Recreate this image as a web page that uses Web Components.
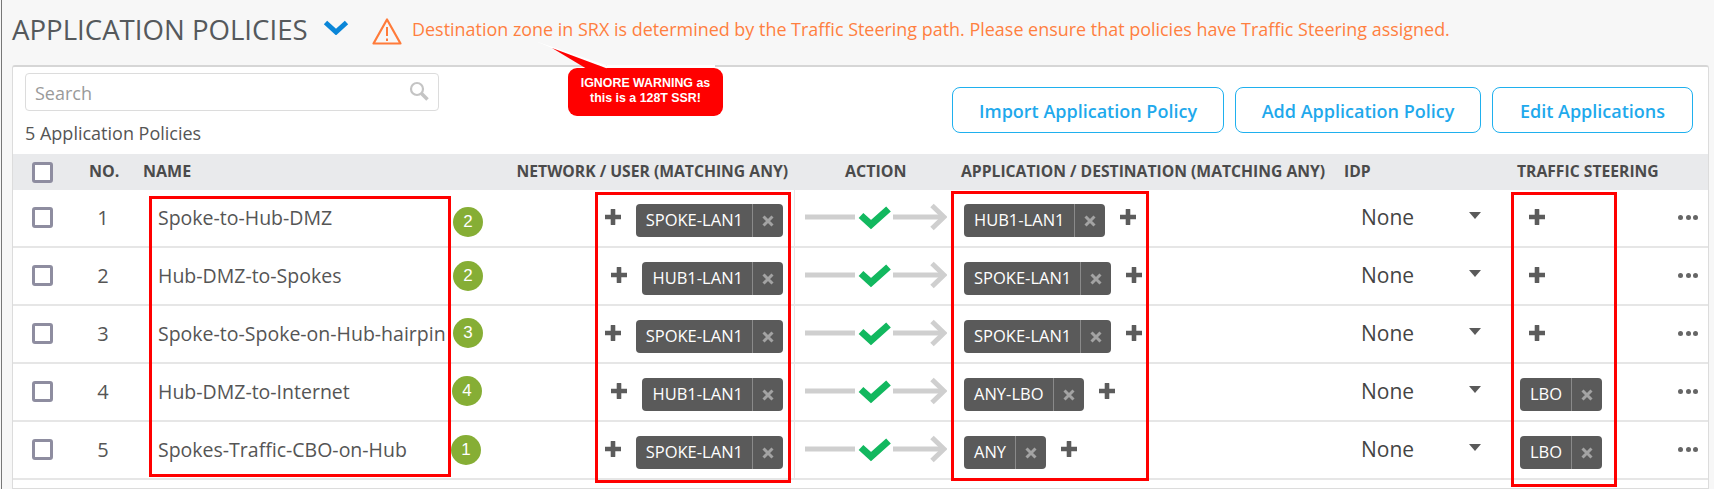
<!DOCTYPE html>
<html>
<head>
<meta charset="utf-8">
<title>Application Policies</title>
<style>
  html, body {
    margin: 0;
    height: 100%;
    background: #f7f7f7;
    overflow: hidden;
  }
</style>
</head>
<body>
<policies-page></policies-page>

<script>
/**
 * Small helper, every element below sets its shadow the same way.
 */
function shadow (el, html) {
  el.attachShadow({ mode: 'open' }).innerHTML = html
}

const FONT = "'Open Sans', 'Noto Sans', sans-serif"
const COLS = '113px 18px 358px 293px 166px 383px 173px 153px 38px'

customElements.define('check-box', class extends HTMLElement {
  constructor () {
    super()
    shadow(this, `<style>
      :host { display: block; width: 21px; height: 21px; box-sizing: border-box;
        border: 3px solid #8e8da0; border-radius: 3px; background: #fff; }
    </style>`)
  }
})

customElements.define('add-icon', class extends HTMLElement {
  constructor () {
    super()
    shadow(this, `<style>
      :host { display: block; width: 16px; height: 16px; flex: none; }
      svg { display: block; }
    </style>
    <svg width="16" height="16" viewBox="0 0 16 16"><path d="M8 1v14M1 8h14" stroke="#5c5c5c" stroke-width="4.6" stroke-linecap="round" fill="none"/></svg>`)
  }
})

customElements.define('tag-chip', class extends HTMLElement {
  constructor () {
    super()
    shadow(this, `<style>
      :host { display: inline-flex; height: 33px; flex: none; background: #5a5a5a; color: #fff;
        border-radius: 4px; font: 16.5px/32px ${FONT}; }
      .label { padding: 0 9px 0 10px; white-space: nowrap; }
      .remove { width: 30px; border-left: 1px solid #8a8a8a; display: flex; align-items: center; justify-content: center; }
      svg { display: block; }
    </style>
    <span class="label"><slot></slot></span>
    <span class="remove"><svg width="12" height="12" viewBox="0 0 12 12"><path d="M1.5 1.5l9 9M10.5 1.5l-9 9" stroke="#a3a3a3" stroke-width="3" fill="none"/></svg></span>`)
  }
})

customElements.define('flow-arrow', class extends HTMLElement {
  constructor () {
    super()
    shadow(this, `<style>
      :host { display: block; width: 142px; height: 30px; }
      svg { display: block; }
    </style>
    <svg width="142" height="30" viewBox="0 0 142 30">
      <path d="M0 15h50M88 15h51" stroke="#cfcfcf" stroke-width="5" fill="none"/>
      <path d="M127 3.500l12 11.500-12 11.500" stroke="#cfcfcf" stroke-width="5" fill="none"/>
      <path d="M56 13.500l10 9 17.500-15.500" stroke="#12b85f" stroke-width="7" fill="none"/>
    </svg>`)
  }
})

customElements.define('idp-select', class extends HTMLElement {
  constructor () {
    super()
    shadow(this, `<style>
      :host { display: flex; align-items: center; font: 21px ${FONT}; color: #444; padding-left: 17px; }
      span { width: 108px; }
      i { width: 0; height: 0; border: 6.500px solid transparent; border-top: 7px solid #5a5a5a; border-bottom: 0; margin-top: -4px; }
    </style>
    <span><slot></slot></span><i></i>`)
  }
})

customElements.define('more-dots', class extends HTMLElement {
  constructor () {
    super()
    shadow(this, `<style>
      :host { display: flex; gap: 2.500px; margin-left: 8px; }
      i { width: 5px; height: 5px; border-radius: 50%; background: #666; }
    </style><i></i><i></i><i></i>`)
  }
})

customElements.define('policy-row', class extends HTMLElement {
  constructor () {
    super()
    shadow(this, `<style>
      :host { display: grid; grid-template-columns: ${COLS}; height: 58px; box-sizing: border-box;
        border-bottom: 2px solid #e6e6e6; font: 19.500px ${FONT}; color: #555; }
      .cell { display: flex; align-items: center; padding-bottom: 2px; min-width: 0; }
      .check { padding-left: 19px; grid-column: 1; }
      .check b { font-weight: 400; font-size: 20px; width: 20px; margin-left: 40px; text-align: center; }
      .check check-box { flex: none; }
      .name { grid-column: 2 / 4; padding-left: 32px; white-space: nowrap; }
      .network { justify-content: flex-end; gap: 15px; padding-right: 11px; border-right: 1px solid #e6e6e6; margin-bottom: -2px; padding-bottom: 4px; }
      ::slotted(tag-chip) { margin-top: 7px; }
      .action { padding-left: 10px; }
      .app { gap: 15px; padding-left: 3px; }
      .steer { padding-left: 3px; }
      .steer.empty { padding-left: 12px; }
    </style>
    <div class="check cell"><check-box></check-box><b>${this.getAttribute('no')}</b></div>
    <div class="name cell">${this.getAttribute('name')}</div>
    <div class="network cell"><add-icon></add-icon><slot name="network"></slot></div>
    <div class="action cell"><flow-arrow></flow-arrow></div>
    <div class="app cell"><slot name="app"></slot><add-icon></add-icon></div>
    <div class="cell"><idp-select>None</idp-select></div>
    <div class="steer cell ${this.hasAttribute('steer') ? '' : 'empty'}"><slot name="steer"><add-icon></add-icon></slot></div>
    <div class="cell"><more-dots></more-dots></div>`)
  }
})

customElements.define('table-head', class extends HTMLElement {
  constructor () {
    super()
    shadow(this, `<style>
      :host { display: grid; grid-template-columns: ${COLS}; height: 36px; box-sizing: border-box; padding-bottom: 2px; align-items: center;
        background: #e9eaec; font: 700 15.700px ${FONT}; color: #4b4b4b; white-space: nowrap; }
      .first { display: flex; align-items: center; padding-left: 19px; font-size: 16px; }
      .first span { margin-left: 36px; }
      .second { grid-column: 2 / 4; padding-left: 17px; font-size: 16px; }
      .net { text-align: right; padding-right: 7px; }
      .act { padding-left: 50px; font-size: 16px; }
      check-box { flex: none; margin-top: 2px; }
    </style>
    <div class="first"><check-box></check-box><span>NO.</span></div>
    <div class="second">NAME</div>
    <div class="net">NETWORK / USER (MATCHING ANY)</div>
    <div class="act">ACTION</div>
    <div>APPLICATION / DESTINATION (MATCHING ANY)</div>
    <div>IDP</div>
    <div>TRAFFIC STEERING</div>
    <div></div>`)
  }
})

customElements.define('action-button', class extends HTMLElement {
  constructor () {
    super()
    shadow(this, `<style>
      :host { display: flex; align-items: center; justify-content: center; height: 46px; box-sizing: border-box;
        border: 1px solid #1fb0ee; border-radius: 8px; background: #fff; color: #1fa9ec; padding-top: 2px;
        font: 600 18px ${FONT}; white-space: nowrap; }
    </style><slot></slot>`)
  }
})

customElements.define('search-box', class extends HTMLElement {
  constructor () {
    super()
    shadow(this, `<style>
      :host { display: flex; align-items: center; justify-content: space-between; width: 414px; height: 38px;
        box-sizing: border-box; border: 1px solid #dcdcdc; border-radius: 4px; padding: 1px 8px 0 9px;
        font: 18px ${FONT}; color: #9a9a9a; background: #fff; }
      svg { display: block; margin-top: -4px; }
    </style>
    <span>Search</span>
    <svg width="21" height="20" viewBox="0 0 21 20"><circle cx="8" cy="8" r="6" stroke="#c4c4c4" stroke-width="2.200" fill="none"/><path d="M12.500 12.500l6 6" stroke="#c4c4c4" stroke-width="3.600" fill="none"/></svg>`)
  }
})

customElements.define('page-title', class extends HTMLElement {
  constructor () {
    super()
    shadow(this, `<style>
      :host { display: flex; align-items: center; height: 65px; padding: 0 0 7px 12px; box-sizing: border-box;
        font: 27.600px ${FONT}; color: #55595c; white-space: nowrap; }
      h1 { font: inherit; margin: 0; width: 311px; flex: none; }
      .chev { margin: -4px 23px 0 0; flex: none; }
      .warn { margin: 4px 10px 0 0; flex: none; }
      p { margin: 0; font-size: 17.950px; color: #ff7f3f; }
      svg { display: block; }
    </style>
    <h1>APPLICATION POLICIES</h1>
    <svg class="chev" width="26" height="15" viewBox="0 0 26 15"><path d="M2.500 2.500l10.500 9.500 10.500-9.500" stroke="#0a86d8" stroke-width="5" fill="none"/></svg>
    <svg class="warn" width="30" height="27" viewBox="0 0 30 27">
      <path d="M15 1.500L1.500 25.500h27z" stroke="#ff7b3a" stroke-width="2.200" stroke-linejoin="round" fill="none"/>
      <path d="M15 9v9M15 20.500v2.500" stroke="#ff7b3a" stroke-width="2" fill="none"/>
    </svg>
    <p><slot></slot></p>`)
  }
})

// annotations drawn over the screenshot, these sit on top of the table
customElements.define('red-box', class extends HTMLElement {
  constructor () {
    super()
    const [x, y, w, h] = this.getAttribute('box').split(' ')
    shadow(this, `<style>
      :host { position: absolute; left: ${x}px; top: ${y}px; width: ${w}px; height: ${h}px;
        box-sizing: border-box; border: 3px solid #f00; }
    </style>`)
  }
})

customElements.define('step-badge', class extends HTMLElement {
  constructor () {
    super()
    const [x, y] = this.getAttribute('at').split(' ')
    shadow(this, `<style>
      :host { position: absolute; left: ${x - 15}px; top: ${y - 15}px; width: 30px; height: 30px; border-radius: 50%;
        background: #86ae35; color: #fff; font: 17px/30px 'Liberation Sans', sans-serif; text-align: center; }
    </style><slot></slot>`)
  }
})

customElements.define('red-callout', class extends HTMLElement {
  constructor () {
    super()
    shadow(this, `<style>
      :host { position: absolute; left: 568px; top: 68px; width: 155px; height: 48px; box-sizing: border-box;
        background: #f00; border-radius: 9px; color: #fff; text-align: center;
        font: 700 12.400px/14.500px 'Liberation Sans', sans-serif; padding-top: 8px; }
      :host::before { content: ''; position: absolute; left: 39px; top: -3px; width: 108px; height: 3px; background: #fff; }
      svg { position: absolute; left: -33px; top: -27px; display: block; }
    </style>
    <svg width="80" height="32" viewBox="0 0 80 32">
      <path d="M0 0L72 24.500V27.500L17 7z" fill="#fff"/>
      <path d="M17 7L52 28H72V27.500z" fill="#f00"/>
    </svg>
    <slot></slot>`)
  }
})

customElements.define('policies-page', class extends HTMLElement {
  constructor () {
    super()
    shadow(this, `<style>
      :host { display: block; position: relative; height: 489px; overflow: hidden; background: #f7f7f7; font-family: ${FONT}; }
      :host::before { content: ''; position: absolute; left: 1px; top: 0; bottom: 0; width: 1px; background: #777; }
      .card { margin: 0 5px 0 12px; height: 424px; box-sizing: border-box; background: #fff;
        border: 1px solid #dcdcdc; border-top: 2px solid #d6d6d6; border-radius: 3px 3px 0 0; }
      .tools { height: 87px; display: grid; grid-template-columns: 1fr auto; padding: 6px 15px 0 12px; box-sizing: border-box; }
      .left { font-size: 18px; color: #555; }
      .count { margin-top: 10px; line-height: 24px; }
      .buttons { display: flex; gap: 11px; padding-top: 14px; align-items: flex-start; }
      .b1 { width: 272px; } .b2 { width: 246px; } .b3 { width: 201px; }
    </style>
    <page-title>Destination zone in SRX is determined by the Traffic Steering path. Please ensure that policies have Traffic Steering assigned.</page-title>
    <div class="card">
      <div class="tools">
        <div class="left"><search-box></search-box><div class="count">5 Application Policies</div></div>
        <div class="buttons">
          <action-button class="b1">Import Application Policy</action-button>
          <action-button class="b2">Add Application Policy</action-button>
          <action-button class="b3">Edit Applications</action-button>
        </div>
      </div>
      <table-head></table-head>
      <policy-row no="1" name="Spoke-to-Hub-DMZ">
        <tag-chip slot="network">SPOKE-LAN1</tag-chip><tag-chip slot="app">HUB1-LAN1</tag-chip>
      </policy-row>
      <policy-row no="2" name="Hub-DMZ-to-Spokes">
        <tag-chip slot="network">HUB1-LAN1</tag-chip><tag-chip slot="app">SPOKE-LAN1</tag-chip>
      </policy-row>
      <policy-row no="3" name="Spoke-to-Spoke-on-Hub-hairpin">
        <tag-chip slot="network">SPOKE-LAN1</tag-chip><tag-chip slot="app">SPOKE-LAN1</tag-chip>
      </policy-row>
      <policy-row no="4" name="Hub-DMZ-to-Internet" steer>
        <tag-chip slot="network">HUB1-LAN1</tag-chip><tag-chip slot="app">ANY-LBO</tag-chip><tag-chip slot="steer">LBO</tag-chip>
      </policy-row>
      <policy-row no="5" name="Spokes-Traffic-CBO-on-Hub" steer>
        <tag-chip slot="network">SPOKE-LAN1</tag-chip><tag-chip slot="app">ANY</tag-chip><tag-chip slot="steer">LBO</tag-chip>
      </policy-row>
    </div>
    <red-box box="149 196 302 281"></red-box>
    <red-box box="595 192 196 291"></red-box>
    <red-box box="951 191 198 290"></red-box>
    <red-box box="1511 192 106 295"></red-box>
    <step-badge at="468 222">2</step-badge>
    <step-badge at="468 276">2</step-badge>
    <step-badge at="468 333">3</step-badge>
    <step-badge at="467 391">4</step-badge>
    <step-badge at="466 450">1</step-badge>
    <red-callout>IGNORE WARNING as<br>this is a 128T SSR!</red-callout>`)
  }
})
</script>
</body>
</html>
